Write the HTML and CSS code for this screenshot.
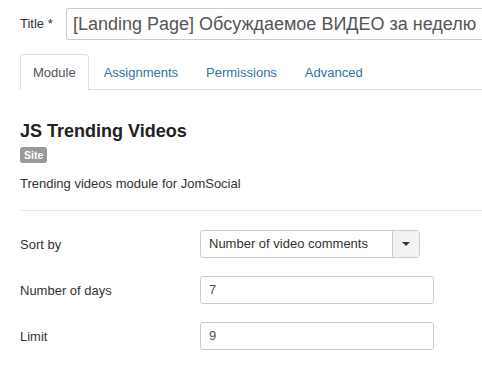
FILE: index.html
```html
<!DOCTYPE html>
<html>
<head>
<meta charset="utf-8">
<link rel="stylesheet" href="styles.css">
</head>
<body>
<div class="page">
  <div class="title-row">
    <label class="title-label">Title *</label>
    <div class="title-input">[Landing Page] Обсуждаемое ВИДЕО за неделю</div>
  </div>
  <ul class="tabs">
    <li class="tab active">Module</li>
    <li class="tab">Assignments</li>
    <li class="tab">Permissions</li>
    <li class="tab">Advanced</li>
  </ul>
  <div class="module-info">
    <h3 class="module-name">JS Trending Videos</h3>
    <span class="badge">Site</span>
    <p class="module-desc">Trending videos module for JomSocial</p>
  </div>
  <hr class="sep">
  <div class="fields">
    <div class="field">
      <div class="field-label">Sort by</div>
      <div class="select">
        <div class="select-text">Number of video comments</div>
        <div class="select-btn"><span class="caret"></span></div>
      </div>
    </div>
    <div class="field">
      <div class="field-label">Number of days</div>
      <div class="input">7</div>
    </div>
    <div class="field">
      <div class="field-label">Limit</div>
      <div class="input">9</div>
    </div>
  </div>
</div>
</body>
</html>
```

FILE: styles.css
```css
* { box-sizing: border-box; }
html, body { margin: 0; padding: 0; background: #fff; }
body {
  font-family: "Liberation Sans", Arial, sans-serif;
  font-size: 13px;
  color: #333;
  overflow: hidden;
  width: 482px;
  height: 376px;
}
.page { padding: 8px 0 0 20px; width: 482px; overflow: hidden; }
.title-row { display: flex; align-items: center; white-space: nowrap; }
.title-label { flex: 0 0 46px; font-size: 13px; color: #333; padding-bottom: 2px; }
.title-input {
  flex: 0 0 430px;
  height: 32px;
  border: 1px solid #ccc;
  border-right: none;
  border-radius: 3px 0 0 3px;
  padding: 0 0 0 6px;
  font-size: 18px;
  line-height: 30px;
  color: #555;
  overflow: hidden;
}
.tabs {
  list-style: none;
  margin: 14px 0 0 0;
  padding: 0;
  display: flex;
  border-bottom: 1px solid #ddd;
  height: 36px;
}
.tab {
  height: 35px;
  padding: 0 12px;
  margin-right: 2px;
  line-height: 35px;
  color: #3071a9;
  border: 1px solid transparent;
  border-bottom: none;
  border-radius: 4px 4px 0 0;
}
.tab.active {
  color: #555;
  border-color: #ddd;
  background: #fff;
  height: 36px;
  margin-bottom: -1px;
}
.module-info { padding-top: 31px; }
.module-name {
  margin: 0;
  font-size: 18px;
  font-weight: bold;
  color: #222;
  line-height: 20px;
}
.badge {
  display: inline-block;
  margin-top: 6px;
  background: #999;
  color: #fff;
  font-size: 10.5px;
  font-weight: bold;
  line-height: 16px;
  height: 16px;
  padding: 0 4px;
  border-radius: 3px;
}
.module-desc { margin: 12px 0 0; font-size: 13px; line-height: 17px; }
.sep {
  margin: 18px 0 0 0;
  border: 0;
  border-top: 1px solid #e6e6e6;
  height: 0;
}
.fields { display: flex; flex-direction: column; gap: 18px; padding-top: 19px; }
.field { display: flex; align-items: center; height: 28px; }
.field-label { flex: 0 0 180px; font-size: 13px; color: #333; }
.select {
  display: flex;
  width: 220px;
  height: 28px;
  border: 1px solid #ccc;
  border-radius: 3px;
}
.select-text { flex: 1; padding-left: 8px; line-height: 26px; color: #333; font-size: 13px; }
.select-btn {
  width: 27px;
  border-left: 1px solid #ccc;
  background: #f2f2f2;
  display: flex;
  align-items: center;
  justify-content: center;
}
.caret {
  width: 0; height: 0;
  border-left: 4px solid transparent;
  border-right: 4px solid transparent;
  border-top: 4px solid #333;
}
.input {
  width: 234px;
  height: 28px;
  border: 1px solid #ccc;
  border-radius: 3px;
  padding-left: 8px;
  line-height: 26px;
  color: #555;
  font-size: 13px;
}
```
